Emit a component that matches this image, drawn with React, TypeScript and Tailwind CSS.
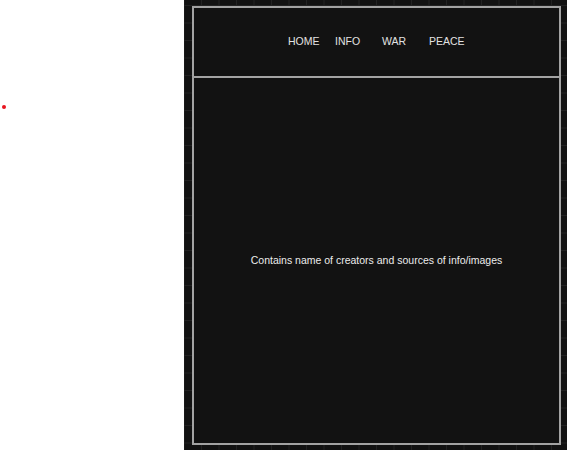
const navItems = ["HOME", "INFO", "WAR", "PEACE"];

const App: React.FC = () => {
  return (
    <div className="flex h-[450px] w-[567px] font-['Liberation_Sans',Arial,sans-serif]">
      <div className="w-[184px] bg-white pt-[105px] pl-[2px]">
        <div className="h-[4px] w-[4px] rounded-full bg-[#e8141e]" />
      </div>
      <div className="flex flex-1 bg-[#121212] bg-[linear-gradient(to_right,#222_1px,transparent_1px),linear-gradient(to_bottom,#222_1px,transparent_1px)] bg-[size:17.5px_17.5px] bg-[position:17px_5px] pt-[6px] pr-[6px] pb-[5px] pl-[8px]">
        <div className="flex flex-1 flex-col border-2 border-[#a3a3a3] bg-[#121212]">
          <nav className="flex h-[70px] items-center border-b-2 border-[#a3a3a3] pl-[94px] text-[10.5px] text-[#e2e2e2]">
            {navItems.map((item) => (
              <span key={item} className="w-[47px] shrink-0">
                {item}
              </span>
            ))}
          </nav>
          <div className="flex flex-1 items-center justify-center text-[10.5px] text-[#ececec]">
            Contains name of creators and sources of info/images
          </div>
        </div>
      </div>
    </div>
  );
};

export default App;
